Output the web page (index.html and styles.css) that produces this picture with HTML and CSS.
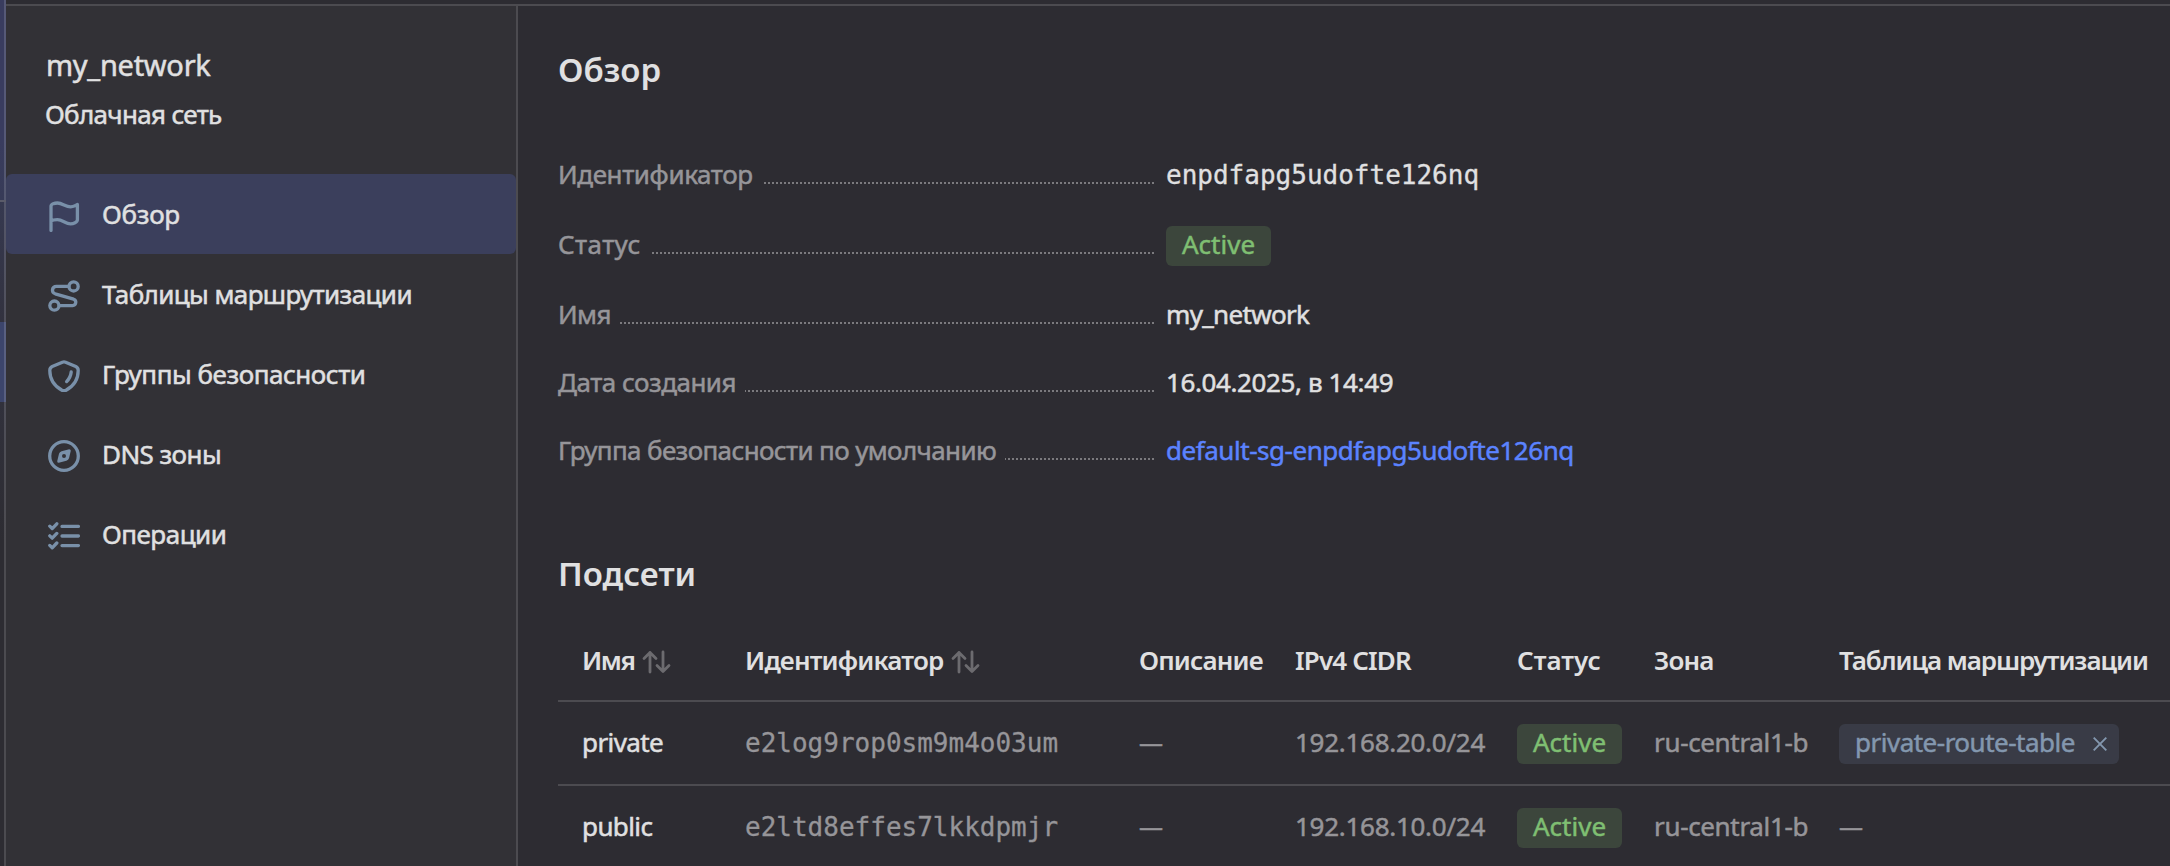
FILE: index.html
```html
<!DOCTYPE html>
<html lang="ru">
<head>
<meta charset="utf-8">
<title>my_network</title>
<link rel="stylesheet" href="styles.css">
</head>
<body>
<div class="page">
  <div class="rail">
    <div class="rail-top"></div>
    <div class="rail-divider"></div>
    <div class="rail-mid"></div>
    <div class="rail-active"></div>
    <div class="rail-rest"></div>
  </div>
  <div class="frame">
    <aside class="sidebar">
      <div class="sidebar-title">my_network</div>
      <div class="sidebar-subtitle">Облачная сеть</div>
      <nav class="nav">
        <a class="nav-item nav-item-active">
          <svg class="nav-icon" viewBox="0 0 16 16"><path d="M1.5 15.2V3.1C1.5 1.9 3.3 1.5 4.7 1.5C7.3 1.5 8.7 3.4 11.3 3.4C12.7 3.4 14.7 2.5 14.7 2.2V9.9C14.7 11.2 12.7 11.9 11.3 11.9C8.7 11.9 7.3 9.8 4.7 9.8C3.3 9.8 1.9 10.2 1.5 10.5"/></svg>
          <span class="ls-28">Обзор</span>
        </a>
        <a class="nav-item">
          <svg class="nav-icon" viewBox="0 0 16 16"><circle cx="12.8" cy="3.2" r="2.3"/><circle cx="3.2" cy="12.8" r="2.3"/><path d="M10.4 3.2H4.2A2 1.9 0 0 0 3.6 6.9L12.8 9.6A1.65 1.65 0 0 1 12.3 12.8H5.6"/></svg>
          <span class="ls-60">Таблицы маршрутизации</span>
        </a>
        <a class="nav-item">
          <svg class="nav-icon" viewBox="0 0 16 16"><path d="M7.2 1.1Q8 .8 8.8 1.1L13.9 3.3Q15.1 3.9 15.1 5.2C15.1 9.4 12.8 13 9 15.1Q8 15.6 7 15.1C3.2 13 .9 9.4 .9 5.2Q.9 3.9 2.1 3.3Z"/><path d="M11.6 6C11.4 7.9 10.6 9.5 9.3 10.8"/></svg>
          <span class="ls-46">Группы безопасности</span>
        </a>
        <a class="nav-item">
          <svg class="nav-icon" viewBox="0 0 16 16"><circle cx="8" cy="8" r="7.15"/><path class="solid" fill-rule="evenodd" d="M10.6 4.6L6.8 5.6Q5.8 6 5.5 6.9L4.6 10.6Q4.6 11.4 5.4 11.4L9.2 10.4Q10.2 10 10.5 9.1L11.4 5.4Q11.4 4.6 10.6 4.6ZM8 7A1 1 0 1 1 8 9A1 1 0 1 1 8 7Z"/></svg>
          <span class="ls-57">DNS зоны</span>
        </a>
        <a class="nav-item">
          <svg class="nav-icon" viewBox="0 0 16 16"><path d="M7 3.2H15.2M7 8H15.2M7 12.8H15.2M.9 3.1L2.1 4.3L4.4 1.9M.9 7.9L2.1 9.1L4.4 6.7M.9 12.7L2.1 13.9L4.4 11.5"/></svg>
          <span class="ls-50">Операции</span>
        </a>
      </nav>
    </aside>
    <main class="main">
      <h1 class="title">Обзор</h1>
      <div class="details">
        <div class="detail detail-tall"><div class="label"><span class="ls-39">Идентификатор</span><i class="leader"></i></div><div class="value mono">enpdfapg5udofte126nq</div></div>
        <div class="detail detail-tall"><div class="label"><span class="ls-plus">Статус</span><i class="leader"></i></div><div class="value"><span class="badge">Active</span></div></div>
        <div class="detail"><div class="label"><span class="ls-60">Имя</span><i class="leader"></i></div><div class="value ls-68">my_network</div></div>
        <div class="detail"><div class="label"><span class="ls-50">Дата создания</span><i class="leader"></i></div><div class="value ls-39">16.04.2025, в 14:49</div></div>
        <div class="detail"><div class="label"><span class="ls-63">Группа безопасности по умолчанию</span><i class="leader"></i></div><div class="value ls-46"><a class="link">default-sg-enpdfapg5udofte126nq</a></div></div>
      </div>
      <h2 class="title title-subnets">Подсети</h2>
      <div class="table">
        <div class="row row-head">
          <div class="sortable"><span class="ls-140">Имя</span><svg class="sort sort-near" viewBox="0 0 26 22"><path d="M7 21V1.5M1 7.5L7 1.5L13 7.5M20 1V20.5M14 14.5L20 20.5L26 14.5"/></svg></div>
          <div class="sortable"><span class="ls-83">Идентификатор</span><svg class="sort" viewBox="0 0 26 22"><path d="M7 21V1.5M1 7.5L7 1.5L13 7.5M20 1V20.5M14 14.5L20 20.5L26 14.5"/></svg></div>
          <div class="ls-83">Описание</div>
          <div class="ls-83">IPv4 CIDR</div>
          <div>Статус</div>
          <div class="ls-83">Зона</div>
          <div class="ls-105">Таблица маршрутизации</div>
        </div>
        <div class="row">
          <div class="name ls-60">private</div>
          <div class="mono">e2log9rop0sm9m4o03um</div>
          <div class="dash">—</div>
          <div class="ls-28">192.168.20.0/24</div>
          <div><span class="badge">Active</span></div>
          <div class="ls-34">ru-central1-b</div>
          <div><span class="chip"><span class="ls-50">private-route-table</span><svg class="close" viewBox="0 0 14 14"><path d="M.7 .7L13.3 13.3M13.3 .7L.7 13.3"/></svg></span></div>
        </div>
        <div class="row">
          <div class="name ls-60">public</div>
          <div class="mono">e2ltd8effes7lkkdpmjr</div>
          <div class="dash">—</div>
          <div class="ls-28">192.168.10.0/24</div>
          <div><span class="badge">Active</span></div>
          <div class="ls-34">ru-central1-b</div>
          <div class="dash">—</div>
        </div>
      </div>
    </main>
  </div>
</div>
</body>
</html>
```

FILE: styles.css
```css
* { box-sizing: border-box; }

body {
  margin: 0;
  background: #2d2c32;
  color: #e0e0e1;
  font: 400 26px/36px "Noto Sans", "Open Sans", sans-serif;
  -webkit-text-stroke: .5px currentColor;
}

.page { display: flex; height: 866px; overflow: hidden; }

/* Edge of the collapsed service rail */
.rail {
  width: 6px;
  flex: none;
  display: flex;
  flex-direction: column;
}
.rail-top { height: 200px; background: linear-gradient(#393c5e 70%, #373b57); }
.rail-divider { height: 2px; background: #5a5b69; }
.rail-mid { height: 120px; background: linear-gradient(#363950, #32323f); }
.rail-active { height: 80px; background: #3c456c; }
.rail-rest { flex: 1; background: linear-gradient(#31313c, #2d2c32 140px); }
.rail-top, .rail-mid, .rail-active, .rail-rest { border-right: 2px solid rgba(255, 255, 255, .15); }

.frame {
  flex: 1;
  min-width: 0;
  display: flex;
  margin-top: 4px;
  border-top: 2px solid #4c4b50;
}

.sidebar {
  width: 512px;
  flex: none;
  background: #323136;
  border-right: 2px solid #4c4b50;
}
.sidebar-title { padding: 41px 0 0 40px; font-size: 29px; letter-spacing: -.28px; }
.sidebar-subtitle { padding: 13px 0 0 39px; letter-spacing: -.68px; }

.nav { margin-top: 42px; }
.nav-item {
  display: flex;
  align-items: center;
  gap: 22px;
  height: 80px;
  padding-left: 42px;
  border-radius: 6px;
}
.nav-item-active { background: #3b3f5c; }
.nav-icon {
  width: 32px;
  height: 32px;
  margin-top: 4px;
  fill: none;
  stroke: #7990a9;
  stroke-width: 1.65;
  stroke-linecap: round;
  stroke-linejoin: round;
}
.nav-icon .solid { fill: #7990a9; stroke: none; }

.main { flex: 1; min-width: 0; padding: 44px 0 0 40px; }
.title { margin: 0; font-size: 33px; line-height: 40px; font-weight: 600; -webkit-text-stroke: 0; }

.details { margin-top: 66px; }
.detail { display: flex; height: 68px; }
.detail-tall { height: 70px; }
.label { display: flex; width: 596px; color: #969599; }
.leader {
  flex: 1;
  height: 2px;
  margin: 26px 0 0 9px;
  background: repeating-linear-gradient(270deg, #7b7a7e 0 2px, transparent 2px 4px);
}
.value { margin-left: 12px; }
.mono { font-family: "DejaVu Sans Mono", monospace; padding-top: 1px; -webkit-text-stroke-width: .3px; }
.link { color: #5b83ff; }

.badge, .chip { display: inline-flex; height: 40px; padding: 0 16px 4px; border-radius: 6px; vertical-align: top; }
.badge { background: #3c463c; color: #7fbf72; }
.chip { background: #393b46; color: #8397ae; padding-right: 12px; align-items: center; }
.close { width: 14px; height: 14px; margin: 4px 0 0 18px; fill: none; stroke: #8397ae; stroke-width: 1.9; }

.title-subnets { margin-top: 54px; }
.table { margin-top: 48px; }
.row {
  display: grid;
  grid-template-columns: 163px 394px 156px 222px 137px 185px 1fr;
  height: 84px;
  padding: 22px 0 0 24px;
  border-bottom: 2px solid #4c4b50;
  color: #969599;
  white-space: nowrap;
}
.row-head { height: 60px; padding-top: 0; color: #e0e0e1; font-weight: 600; -webkit-text-stroke: 0; }
.name { color: #e0e0e1; }
.dash { font-size: 24px; }
.sortable { display: flex; }
.sort { width: 26px; height: 22px; margin: 9px 0 0 9px; fill: none; stroke: #6c6b6f; stroke-width: 2.8; overflow: visible; stroke-linecap: round; stroke-linejoin: round; }
.sort-near { margin-left: 8px; }

/* Tracking, hundredths of a pixel */
.ls-plus { letter-spacing: .4px; }
.ls-28 { letter-spacing: -.28px; }
.ls-34 { letter-spacing: -.34px; }
.ls-39 { letter-spacing: -.39px; }
.ls-46 { letter-spacing: -.46px; }
.ls-50 { letter-spacing: -.5px; }
.ls-57 { letter-spacing: -.57px; }
.ls-60 { letter-spacing: -.6px; }
.ls-63 { letter-spacing: -.63px; }
.ls-68 { letter-spacing: -.68px; }
.ls-83 { letter-spacing: -.83px; }
.ls-105 { letter-spacing: -1.05px; }
.ls-140 { letter-spacing: -1.4px; }
```
